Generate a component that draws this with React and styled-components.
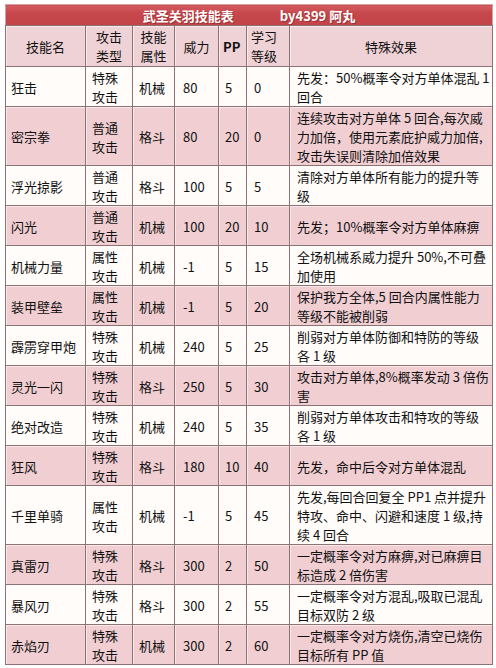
import styled, { createGlobalStyle } from "styled-components";

const GlobalStyle = createGlobalStyle`
    body {
        margin: 0;
        background: #fff;
        font-family: "Noto Sans CJK SC", "Liberation Sans", sans-serif;
    }
`

const Page = styled.div`
    padding: 4px 5px;
`

const Table = styled.table`
    width: 487px;
    table-layout: fixed;
    border-collapse: collapse;
    border: 1px solid #d6a2a6;
    font-size: 13px;
    line-height: 19px;
    color: #111;
`

const Col = styled.col`
    width: ${(p) => p.$w}px;
`

const TitleCell = styled.th`
    height: 20px;
    padding: 0;
    background: linear-gradient(#d45d62, #c5464b 40%, #c2454a);
    color: #fff;
    font-weight: bold;
    text-align: center;
    text-shadow: 1px 1px 0 rgba(110, 20, 20, 0.45);
    border-bottom: 1px solid #8f6f70;
`

const Signature = styled.span`
    margin-left: 46px;
`

const HeadCell = styled.th`
    height: 40px;
    padding: 0 4px;
    background: #efd2d5;
    font-weight: ${(p) => (p.$bold ? "bold" : "normal")};
    text-align: ${(p) => (p.$center ? "center" : "left")};
    vertical-align: middle;
    border: 1px solid #8f7273;
    box-shadow: inset 1px 1px 0 rgba(255, 255, 255, 0.55);
    white-space: nowrap;
`

const Row = styled.tr`
    background: ${(p) => (p.$alt ? "#f0ced2" : "#fffcfa")};
`

const Cell = styled.td`
    padding: 1px 0 0 ${(p) => p.$pad || 6}px;
    vertical-align: middle;
    border: 1px solid #8f7273;
    box-shadow: inset 1px 1px 0 rgba(255, 255, 255, 0.55);
    white-space: nowrap;
    overflow: hidden;
`

const Line = styled.div`
    height: 19px;
`

const Lines = ({ text }) => text.split("|").map((t) => <Line key={t}>{t}</Line>)

const skills = [
    ["狂击", "特殊|攻击", "机械", "80", "5", "0", "先发：50%概率令对方单体混乱 1|回合"],
    ["密宗拳", "普通|攻击", "格斗", "80", "20", "0", "连续攻击对方单体 5 回合,每次威|力加倍，使用元素庇护威力加倍,|攻击失误则清除加倍效果"],
    ["浮光掠影", "普通|攻击", "格斗", "100", "5", "5", "清除对方单体所有能力的提升等|级"],
    ["闪光", "普通|攻击", "机械", "100", "20", "10", "先发；10%概率令对方单体麻痹"],
    ["机械力量", "属性|攻击", "机械", "-1", "5", "15", "全场机械系威力提升 50%,不可叠|加使用"],
    ["装甲壁垒", "属性|攻击", "机械", "-1", "5", "20", "保护我方全体,5 回合内属性能力|等级不能被削弱"],
    ["霹雳穿甲炮", "特殊|攻击", "机械", "240", "5", "25", "削弱对方单体防御和特防的等级|各 1 级"],
    ["灵光一闪", "特殊|攻击", "格斗", "250", "5", "30", "攻击对方单体,8%概率发动 3 倍伤|害"],
    ["绝对改造", "特殊|攻击", "机械", "240", "5", "35", "削弱对方单体攻击和特攻的等级|各 1 级"],
    ["狂风", "特殊|攻击", "格斗", "180", "10", "40", "先发，命中后令对方单体混乱"],
    ["千里单骑", "属性|攻击", "机械", "-1", "5", "45", "先发,每回合回复全 PP1 点并提升|特攻、命中、闪避和速度 1 级,持|续 4 回合"],
    ["真雷刃", "特殊|攻击", "格斗", "300", "2", "50", "一定概率令对方麻痹,对已麻痹目|标造成 2 倍伤害"],
    ["暴风刃", "特殊|攻击", "格斗", "300", "2", "55", "一定概率令对方混乱,吸取已混乱|目标双防 2 级"],
    ["赤焰刃", "特殊|攻击", "机械", "300", "2", "60", "一定概率令对方烧伤,清空已烧伤|目标所有 PP 值"],
];

const widths = [80, 47, 42, 44, 28, 43, 203];

const App = () => {
    return (
        <>
            <GlobalStyle />
            <Page>
                <Table>
                    <colgroup>
                        {widths.map((w, i) => (
                            <Col key={i} $w={w} />
                        ))}
                    </colgroup>
                    <thead>
                        <tr>
                            <TitleCell colSpan={7}>
                                武圣关羽技能表<Signature>by4399 阿丸</Signature>
                            </TitleCell>
                        </tr>
                        <tr>
                            <HeadCell $center>技能名</HeadCell>
                            <HeadCell $center><Lines text="攻击|类型" /></HeadCell>
                            <HeadCell $center><Lines text="技能|属性" /></HeadCell>
                            <HeadCell $center>威力</HeadCell>
                            <HeadCell $bold>PP</HeadCell>
                            <HeadCell><Lines text="学习|等级" /></HeadCell>
                            <HeadCell $center>特殊效果</HeadCell>
                        </tr>
                    </thead>
                    <tbody>
                        {skills.map((s, i) => (
                            <Row key={s[0]} $alt={i % 2 === 1}>
                                <Cell $pad={5}>{s[0]}</Cell>
                                <Cell><Lines text={s[1]} /></Cell>
                                <Cell>{s[2]}</Cell>
                                <Cell $pad={8}>{s[3]}</Cell>
                                <Cell>{s[4]}</Cell>
                                <Cell $pad={7}>{s[5]}</Cell>
                                <Cell $pad={7}><Lines text={s[6]} /></Cell>
                            </Row>
                        ))}
                    </tbody>
                </Table>
            </Page>
        </>
    )
}

export default App;
